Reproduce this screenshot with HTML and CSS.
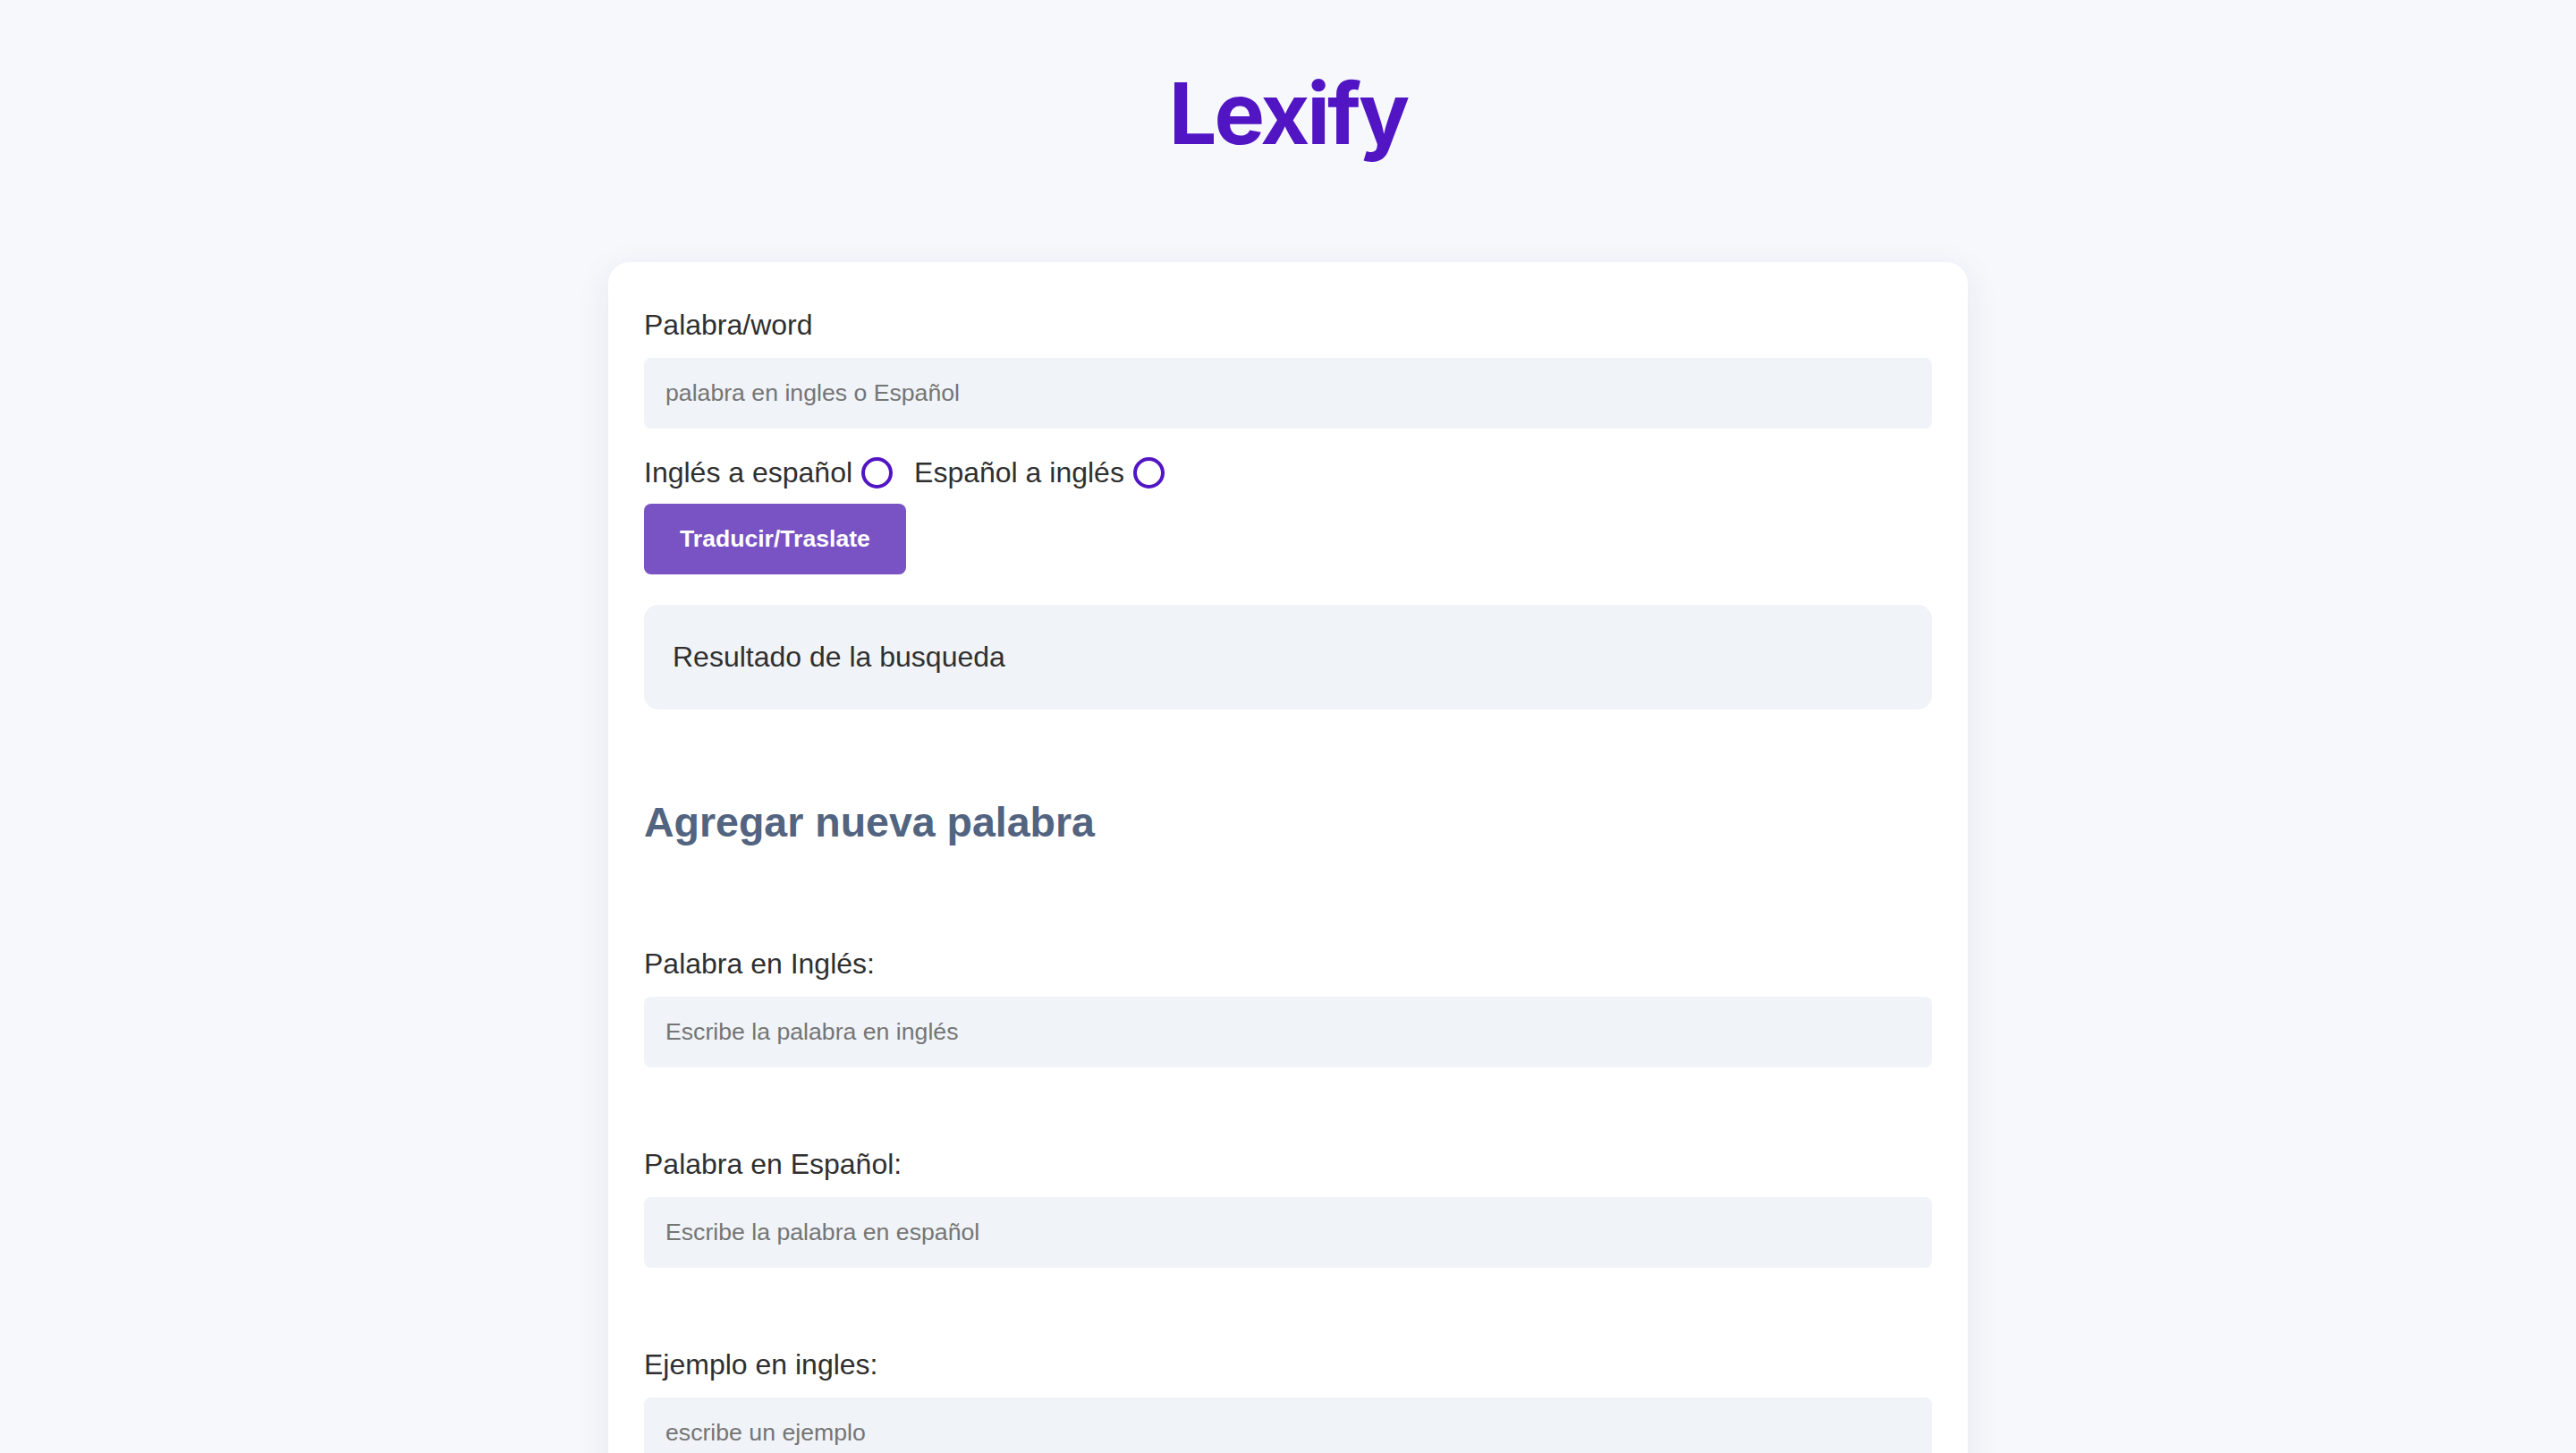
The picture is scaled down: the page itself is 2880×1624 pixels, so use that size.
FILE: index.html
```html
<!DOCTYPE html>
<html lang="es">
<head>
<meta charset="utf-8">
<title>Lexify</title>
<link rel="stylesheet" href="styles.css">
</head>
<body>
<div class="page">
  <h1 class="brand">Lexify</h1>
  <main class="card">
    <section class="search">
      <label class="field-label" for="word">Palabra/word</label>
      <input class="field" id="word" type="text" placeholder="palabra en ingles o Español">
      <div class="direction">
        <label class="option">Inglés a español<input class="radio" type="radio" name="dir"></label>
        <label class="option">Español a inglés<input class="radio" type="radio" name="dir"></label>
      </div>
      <button class="btn" type="button">Traducir/Traslate</button>
      <div class="result">Resultado de la busqueda</div>
    </section>
    <section class="add">
      <h2 class="section-title">Agregar nueva palabra</h2>
      <div class="group">
        <label class="field-label" for="en">Palabra en Inglés:</label>
        <input class="field" id="en" type="text" placeholder="Escribe la palabra en inglés">
      </div>
      <div class="group">
        <label class="field-label" for="es">Palabra en Español:</label>
        <input class="field" id="es" type="text" placeholder="Escribe la palabra en español">
      </div>
      <div class="group">
        <label class="field-label" for="ex-en">Ejemplo en ingles:</label>
        <input class="field" id="ex-en" type="text" placeholder="escribe un ejemplo">
      </div>
      <div class="group">
        <label class="field-label" for="ex-es">Ejemplo en español:</label>
        <input class="field" id="ex-es" type="text" placeholder="escribe un ejemplo">
      </div>
      <button class="btn add-btn" type="button">Agregar</button>
    </section>
  </main>
</div>
</body>
</html>
```

FILE: styles.css
```css
html, body {
  margin: 0;
  padding: 0;
}

body {
  background: #f7f8fc;
  font-family: "Liberation Sans", Arial, sans-serif;
  color: #2f2f2f;
}

.page {
  padding-top: 70px;
  padding-bottom: 120px;
}

.brand {
  margin: 0 0 109px;
  text-align: center;
  font-family: Inter, "Liberation Sans", sans-serif;
  font-weight: 700;
  font-size: 95px;
  line-height: 114px;
  letter-spacing: -3px;
  color: #5115c4;
}

.card {
  width: 1520px;
  box-sizing: border-box;
  margin: 0 auto;
  padding: 51px 40px 60px;
  background: #ffffff;
  border-radius: 24px;
  box-shadow: 0 10px 40px rgba(30, 40, 90, 0.08);
}

.field-label {
  display: block;
  font-size: 32px;
  line-height: 38px;
  margin-bottom: 18px;
  color: #2f2f2f;
}

.field {
  display: block;
  width: 100%;
  height: 79px;
  box-sizing: border-box;
  padding: 0 24px;
  border: none;
  border-radius: 8px;
  background: #f0f3f7;
  font-family: "Liberation Sans", Arial, sans-serif;
  font-size: 26.67px;
  color: #2f2f2f;
  outline: none;
}

.field::placeholder {
  color: #757575;
}

.direction {
  display: flex;
  align-items: center;
  gap: 24px;
  margin-top: 31px;
  height: 37px;
}

.option {
  display: flex;
  align-items: center;
  font-size: 32px;
  line-height: 37px;
  color: #2f2f2f;
}

.radio {
  appearance: none;
  -webkit-appearance: none;
  width: 35px;
  height: 35px;
  box-sizing: border-box;
  margin: 0 0 0 10px;
  border: 4px solid #5115c4;
  border-radius: 50%;
  background: #ffffff;
}

.btn {
  display: block;
  margin-top: 16px;
  height: 79px;
  padding: 0 40px;
  border: none;
  border-radius: 8px;
  background: #7952c4;
  color: #ffffff;
  font-family: "Liberation Sans", Arial, sans-serif;
  font-weight: 700;
  font-size: 26.6px;
}

.result {
  margin-top: 34px;
  padding: 32px;
  border-radius: 16px;
  background: #f0f3f7;
  font-size: 32px;
  line-height: 53px;
  color: #2f2f2f;
}

.section-title {
  margin: 98px 0 111px;
  font-size: 46.5px;
  line-height: 56px;
  font-weight: 700;
  color: #526480;
}

.group + .group {
  margin-top: 89px;
}

.add-btn {
  margin-top: 60px;
}
```
